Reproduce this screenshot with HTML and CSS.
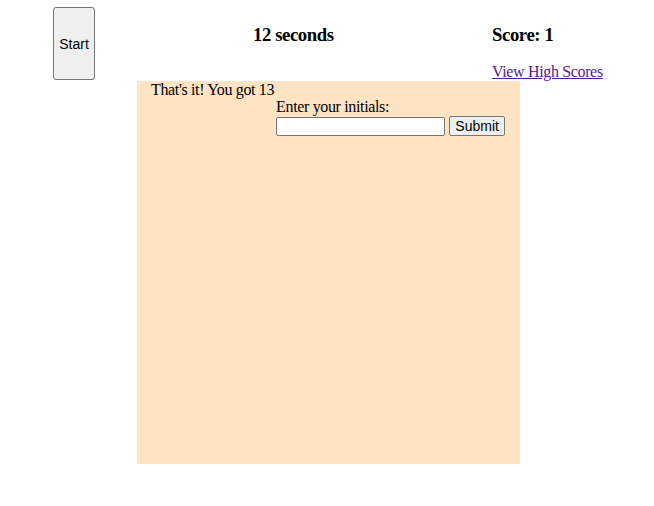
FILE: index.html
```html
<!DOCTYPE html>
<html>
<head>
<meta charset="utf-8">
<link rel="stylesheet" href="styles.css">
</head>
<body>
  <header class="top">
    <button class="start-btn">Start</button>
    <h3 class="timer">12 seconds</h3>
    <div class="score-col">
      <h3 class="score">Score: 1</h3>
      <a class="hs-link" href="#">View High Scores</a>
    </div>
  </header>
  <main class="game">
    <div class="message">That's it! You got 13</div>
    <form class="initials-form">
      <label class="initials-label">Enter your initials:</label>
      <div class="form-row">
        <input class="initials-input" type="text">
        <button class="submit-btn" type="button">Submit</button>
      </div>
    </form>
  </main>
</body>
</html>
```

FILE: styles.css
```css
html, body {
  margin: 0;
  padding: 0;
  background: #ffffff;
}
body {
  font-family: "Liberation Serif", "Times New Roman", serif;
  font-size: 16px;
  letter-spacing: -0.35px;
  color: #000;
  padding: 7px 8px 0 8px;
}
.top {
  display: grid;
  grid-template-columns: 200px 239px auto;
  padding-left: 45px;
  align-items: start;
  height: 74px;
}
.start-btn {
  width: 42px;
  height: 73px;
  margin: 0;
  padding: 0;
  font-family: "Liberation Sans", Arial, sans-serif;
  font-size: 14px;
  letter-spacing: 0;
  color: #000;
  background: #efefef;
  border: 1px solid #767676;
  border-radius: 3px;
}
.timer, .score {
  font-size: 18.72px;
  font-weight: bold;
  letter-spacing: -0.4px;
  margin: 16.7px 0 0 0;
  line-height: 21.5px;
}
.score-col {
  display: flex;
  flex-direction: column;
  align-items: flex-start;
}
.hs-link {
  margin-top: 18px;
  color: #551a8b;
  line-height: 18px;
}
.game {
  width: 383px;
  height: 383px;
  margin: 0 0 0 129px;
  background: #ffe4c4;
  display: flex;
  align-items: flex-start;
  padding-left: 14px;
  box-sizing: border-box;
  line-height: 18px;
}
.initials-form {
  margin: 17px 0 0 2px;
  display: flex;
  flex-direction: column;
}
.form-row {
  display: flex;
  align-items: center;
  gap: 4px;
}
.initials-input {
  width: 169px;
  height: 19px;
  box-sizing: border-box;
  margin: 0;
  border: 1px solid #767676;
  border-radius: 2px;
  background: #fff;
  padding: 1px 2px;
}
.submit-btn {
  width: 56px;
  height: 20px;
  box-sizing: border-box;
  margin: 0;
  padding: 0;
  font-family: "Liberation Sans", Arial, sans-serif;
  font-size: 14px;
  letter-spacing: 0;
  color: #000;
  background: #efefef;
  border: 1px solid #767676;
  border-radius: 2px;
}
```
